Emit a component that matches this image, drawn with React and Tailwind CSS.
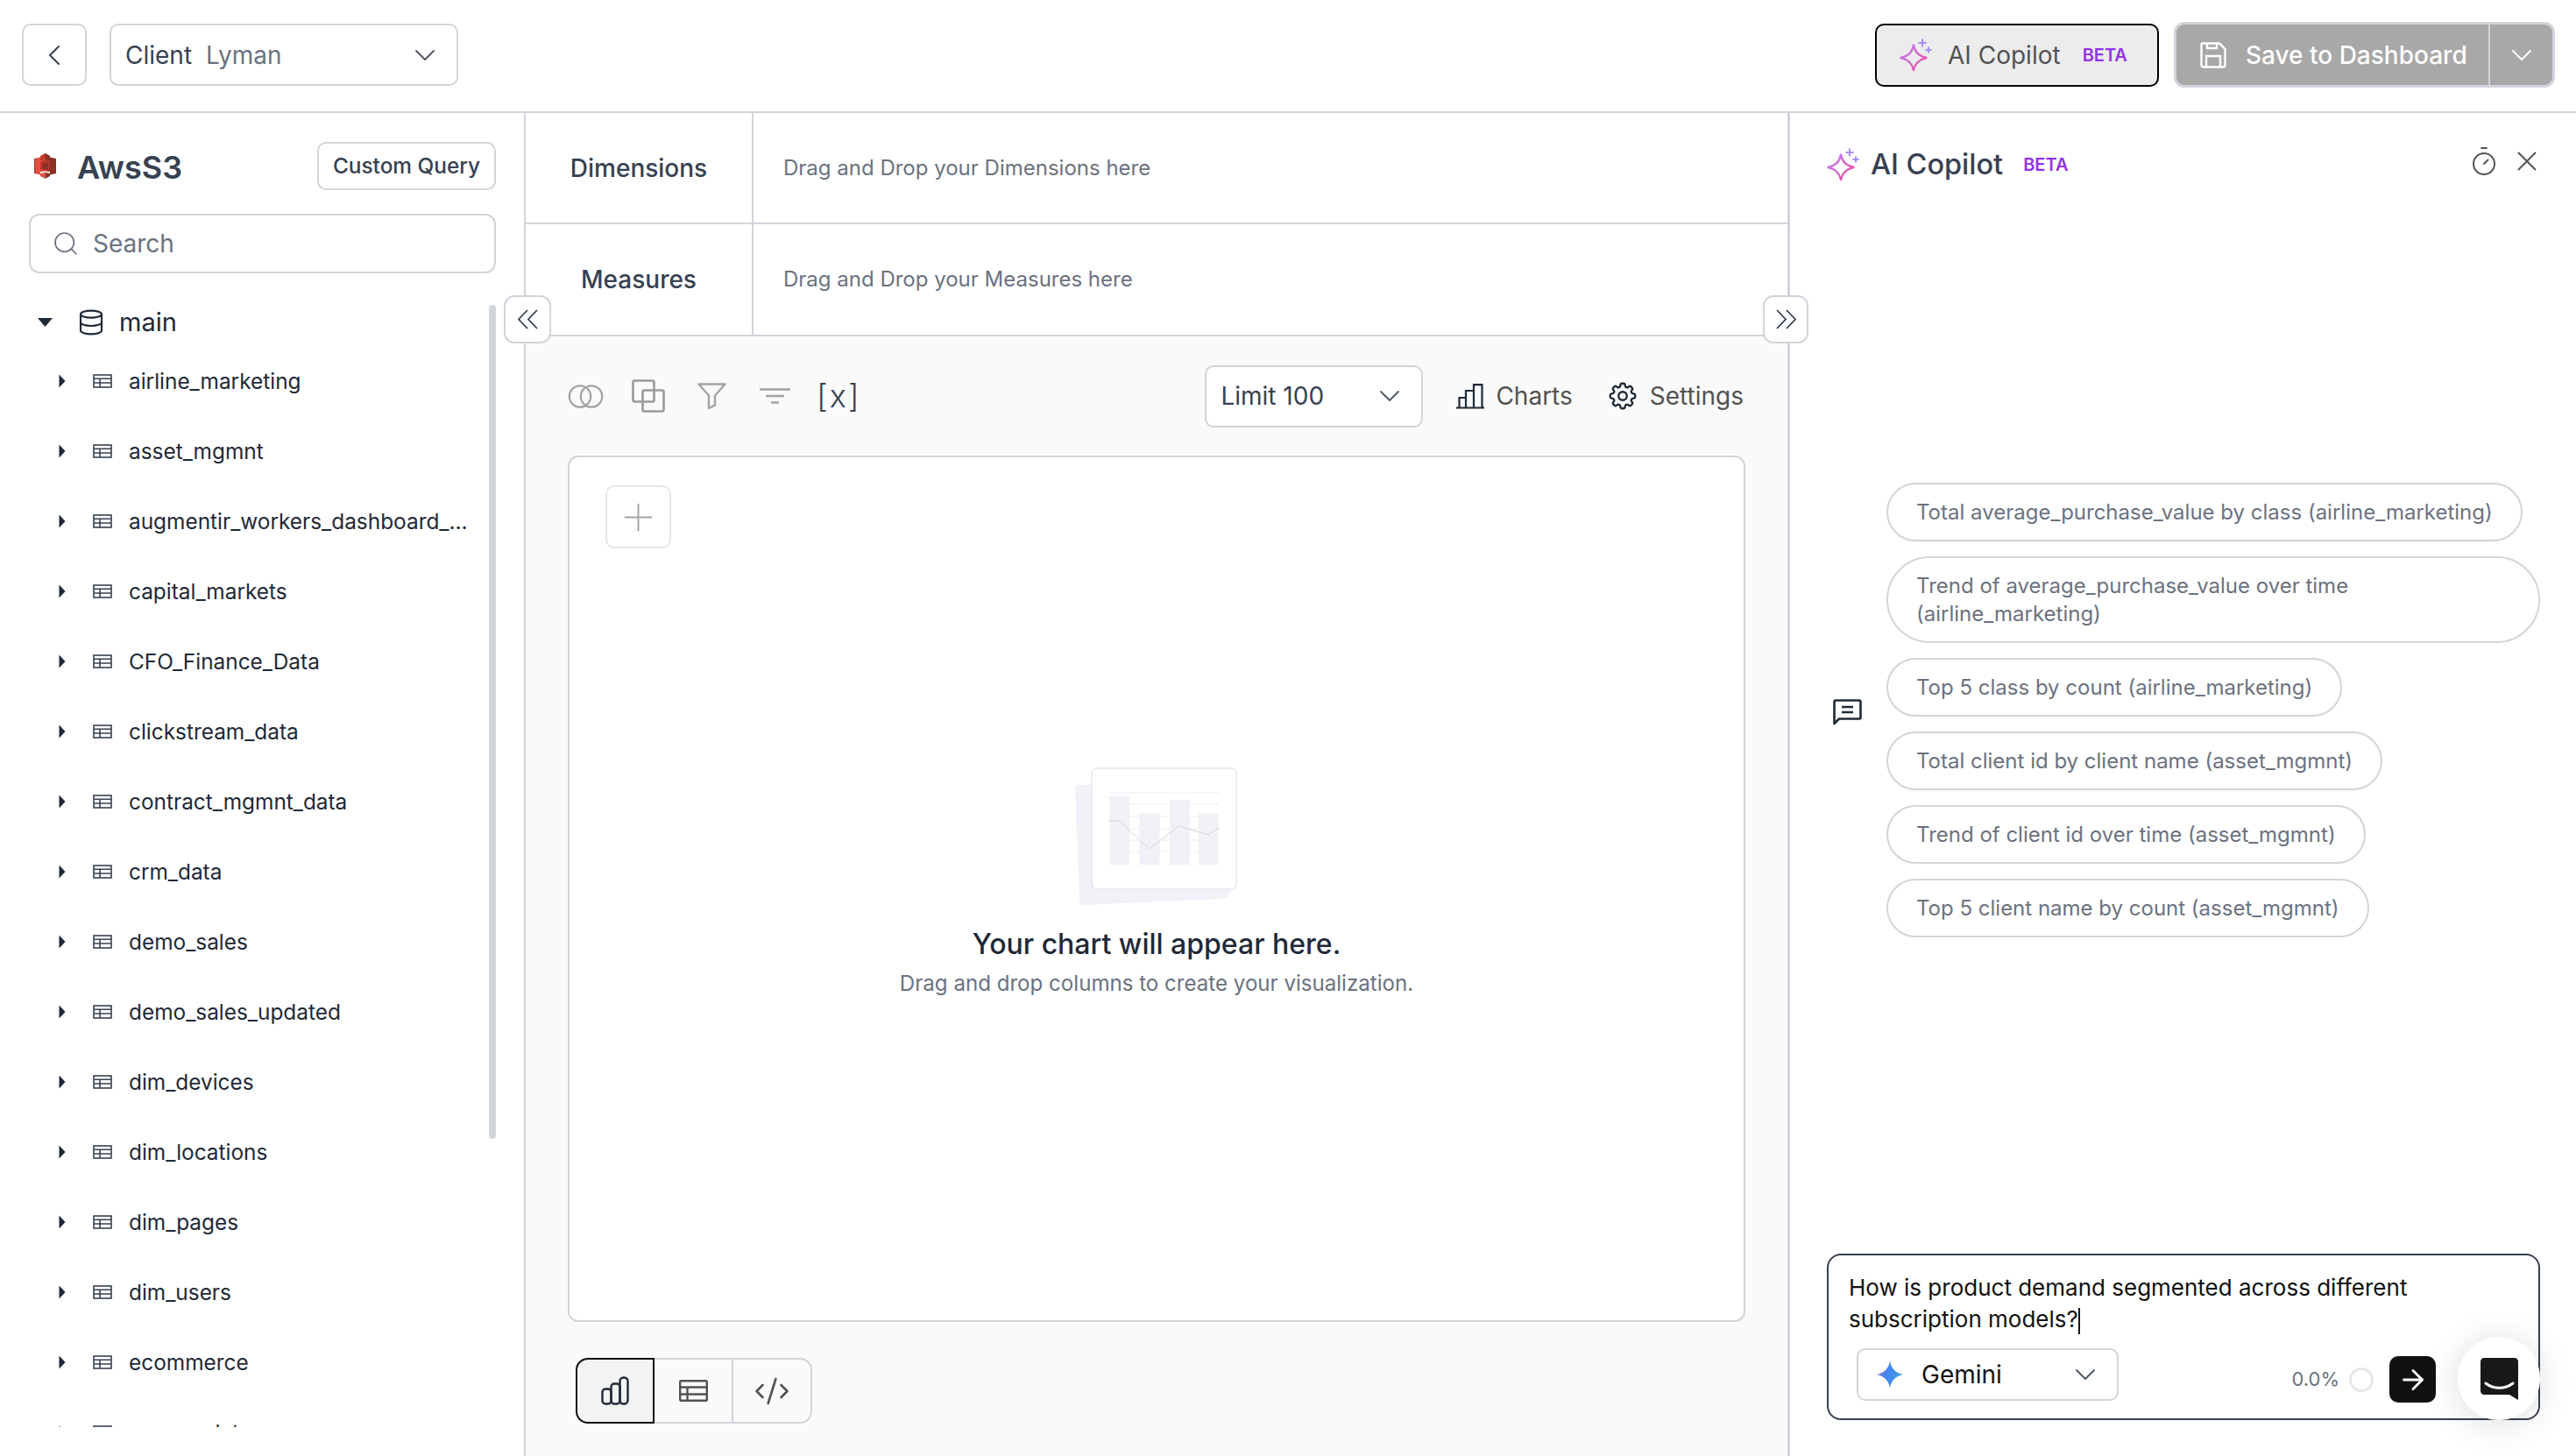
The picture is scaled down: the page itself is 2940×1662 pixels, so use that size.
import React from 'react';
import { ChevronLeft, ChevronDown, Search, Database, Plus, Timer, X, CodeXml, ArrowRight } from 'lucide-react';
import { HiOutlineCog8Tooth } from 'react-icons/hi2';

const TABLES = [
  'airline_marketing',
  'asset_mgmnt',
  'augmentir_workers_dashboard_data',
  'capital_markets',
  'CFO_Finance_Data',
  'clickstream_data',
  'contract_mgmnt_data',
  'crm_data',
  'demo_sales',
  'demo_sales_updated',
  'dim_devices',
  'dim_locations',
  'dim_pages',
  'dim_users',
  'ecommerce',
  'energy_data',
];

const SUGGESTIONS = [
  'Total average_purchase_value by class (airline_marketing)',
  'Trend of average_purchase_value over time (airline_marketing)',
  'Top 5 class by count (airline_marketing)',
  'Total client id by client name (asset_mgmnt)',
  'Trend of client id over time (asset_mgmnt)',
  'Top 5 client name by count (asset_mgmnt)',
];

function Sparkles({ id, className }) {
  return (
    <svg viewBox="0 0 37 37" fill="none" className={className}>
      <defs>
        <linearGradient id={id} x1="0" y1="0" x2="1" y2="1">
          <stop offset="0" stopColor="#c084fc" />
          <stop offset="1" stopColor="#ec4899" />
        </linearGradient>
      </defs>
      <path d="M16 7.5C17.5 15 21 19.5 30.5 22C21 24.5 17.5 29 16 36C14.5 29 11 24.5 1.5 22C11 19.5 14.5 15 16 7.5Z" stroke={`url(#${id})`} strokeWidth="2.4" strokeLinejoin="round" />
      <path d="M26 0.5V9.5M21.5 5H30.5M33 9.5V16.5M29.5 13H36.5" stroke="#a78bfa" strokeWidth="2" />
    </svg>
  );
}

function AwsLogo() {
  return (
    <svg viewBox="0 0 25 29" className="w-[25px] h-[29px] shrink-0">
      <path d="M0 6L7 4.5V24.5L0 23Z" fill="#e05243" />
      <path d="M0 6L1.5 5.7V23.3L0 23Z" fill="#b83c2e" />
      <path d="M25 6L18 4.5V24.5L25 23Z" fill="#8c3123" />
      <path d="M7 3L12.5 0L18 3V8.5L12.5 7.5L7 8.5Z" fill="#c7392c" />
      <path d="M12.5 0L18 3V8.5L12.5 7.5Z" fill="#8c3123" />
      <path d="M7 8.5L12.5 7.5L18 8.5V21L12.5 20L7 21Z" fill="#c7392c" />
      <path d="M12.5 7.5L18 8.5V21L12.5 20Z" fill="#a8372a" />
      <path d="M9.5 11H15.5V18H9.5Z" fill="#8c3123" />
      <path d="M7 21L12.5 20L18 21L12.5 22Z" fill="#f2b0a9" />
      <path d="M7 23L12.5 22V29L7 26Z" fill="#e05243" />
      <path d="M18 23L12.5 22V29L18 26Z" fill="#8c3123" />
    </svg>
  );
}

function TableIcon({ className }) {
  return (
    <svg viewBox="0 0 22 16" fill="none" stroke="currentColor" strokeWidth="1.6" className={className}>
      <rect x="1" y="1" width="20" height="14" />
      <path d="M1 5.2H21M1 10H21M8 5.2V15" />
    </svg>
  );
}

function TreeRow({ name }) {
  return (
    <div className="flex items-center h-[80px] pl-[34px] shrink-0">
      <svg viewBox="0 0 8 16" className="w-[8px] h-[16px] shrink-0 text-[#1f2937]">
        <path d="M0.5 0.5L7.5 8L0.5 15.5Z" fill="currentColor" />
      </svg>
      <TableIcon className="w-[22px] h-[16px] ml-[31px] shrink-0 text-[#374151]" />
      <span className="ml-[19px] pt-[1px] text-[24.4px] text-[#1f2937] truncate max-w-[387px]">{name}</span>
    </div>
  );
}

function Sidebar() {
  return (
    <aside className="relative w-[600px] shrink-0 border-r-2 border-[#d1d5db] pt-[33px] pb-[33px] pl-[33px] pr-[32px] flex flex-col h-full">
      <div className="flex items-center justify-between h-[55px] shrink-0">
        <div className="flex items-center gap-[24px] pl-[6px]">
          <AwsLogo />
          <span className="pt-[2px] text-[36px] font-semibold text-[#374151]">AwsS3</span>
        </div>
        <button className="w-[204px] h-[55px] rounded-[10px] border-2 border-[#d1d5db] text-[24.4px] font-medium text-[#374151]">Custom Query</button>
      </div>
      <div className="mt-[27px] h-[68px] shrink-0 rounded-[12px] border-2 border-[#d1d5db] flex items-center pl-[24px]">
        <Search className="w-[32px] h-[32px] text-[#6b7280]" strokeWidth={1.3} />
        <span className="ml-[15px] text-[28px] text-[#6b7280]">Search</span>
      </div>
      <div className="mt-[35px] flex-1 overflow-hidden flex flex-col">
        <div className="flex items-center h-[42px] pl-[10px] shrink-0">
          <svg viewBox="0 0 17 10" className="w-[17px] h-[10px] text-[#1f2937]"><path d="M0 0H17L8.5 10Z" fill="currentColor" /></svg>
          <Database className="w-[32px] h-[32px] ml-[28px] text-[#1f2937]" strokeWidth={1.6} />
          <span className="ml-[16px] text-[29px] text-[#1f2937]">main</span>
        </div>
        <div className="h-[6px] shrink-0" />
        {TABLES.map((t) => <TreeRow key={t} name={t} />)}
      </div>
      <div className="absolute left-[558px] top-[219px] w-[8px] h-[952px] rounded-full bg-[#d1d5db]" />
      <button className="absolute right-[-31px] top-[208px] w-[54px] h-[55px] z-10 bg-white rounded-[12px] border-2 border-[#d1d5db] flex items-center justify-center">
        <svg viewBox="0 0 23 23" fill="none" stroke="#374151" strokeWidth="1.8" className="w-[23px] h-[23px]">
          <path d="M11 1L1 11.5L11 22M22 1L12 11.5L22 22" />
        </svg>
      </button>
    </aside>
  );
}

function DropRow({ label, hint, height }) {
  return (
    <div className={`flex ${height} border-b-2 border-[#d1d5db] bg-white shrink-0`}>
      <div className="w-[260px] border-r-2 border-[#d1d5db] flex items-center justify-center text-[28px] font-medium text-[#374151]">{label}</div>
      <div className="flex items-center pl-[34px] text-[24px] text-[#6b7280]">{hint}</div>
    </div>
  );
}

function Toolbar() {
  return (
    <div className="h-[136px] shrink-0 flex items-center justify-between">
      <div className="flex items-center text-[#a3a3a3]">
        <svg viewBox="0 0 41 27" fill="none" stroke="currentColor" strokeWidth="2.2" className="w-[41px] h-[27px]">
          <circle cx="14" cy="13.5" r="12.2" />
          <circle cx="27" cy="13.5" r="12.2" />
        </svg>
        <svg viewBox="0 0 38 38" fill="none" stroke="#9a9a9a" strokeWidth="2.6" className="w-[38px] h-[38px] ml-[32px]">
          <rect x="1.5" y="1.5" width="24" height="24" rx="2" />
          <rect x="12.5" y="12.5" width="24" height="24" rx="2" />
        </svg>
        <svg viewBox="0 0 33 30" fill="none" stroke="currentColor" strokeWidth="2.4" strokeLinejoin="round" className="w-[33px] h-[30px] ml-[37px]">
          <path d="M1.5 1.5H31.5L20 14.5V25.5L13 29V14.5Z" />
        </svg>
        <svg viewBox="0 0 35 18" fill="none" stroke="currentColor" strokeWidth="2.4" className="w-[35px] h-[18px] ml-[38px]">
          <path d="M0 1.5H35M7 9H28M13 16.5H22" />
        </svg>
        <span className="ml-[30px] text-[36px] leading-none font-light tracking-[0.06em] text-[#374151]">[x]</span>
      </div>
      <div className="flex items-center pr-[2px]">
        <div className="w-[249px] h-[71px] bg-white rounded-[10px] border-2 border-[#d1d5db] flex items-center justify-between pl-[16px] pr-[16px]">
          <span className="text-[28px] text-[#374151]">Limit 100</span>
          <ChevronDown className="w-[40px] h-[40px] text-[#4b5563]" strokeWidth={1.1} />
        </div>
        <svg viewBox="0 0 32 29" fill="none" stroke="#1f2937" strokeWidth="2.2" className="w-[32px] h-[29px] ml-[38px]">
          <path d="M0 27.5H32M3.5 27.5V16H11V27.5M11 27.5V8H20V27.5M20 27.5V1.2H29.5V27.5" />
        </svg>
        <span className="ml-[13px] text-[28px] text-[#525252]">Charts</span>
        <HiOutlineCog8Tooth className="w-[38px] h-[38px] ml-[38px] text-[#1f2937]" />
        <span className="ml-[12px] text-[28px] text-[#525252]">Settings</span>
      </div>
    </div>
  );
}

function EmptyChart() {
  return (
    <div className="flex flex-col items-center mt-[-12px]">
      <svg viewBox="-1 0 190 164" className="w-[190px] h-[164px]" fill="none">
        <path d="M6 16H30V20H5C3 20 1 21 1 25L6 151C6 155 8 157 12 157L170 150C176 150 178 146 178 140V16Z" fill="#f1f2f7" />
        <rect x="20" y="1" width="165" height="138" rx="6" fill="white" stroke="#e5e7eb" strokeWidth="1.5" />
        <path d="M40 29H165M40 42H165M40 56H165M40 70H165M40 83H165M40 96H165" stroke="#f3f4f6" strokeWidth="1.5" />
        <path d="M40 33H63V111H40ZM74.5 52.5H97.5V111H74.5ZM109 37H132V111H109ZM142 52.5H165V111H142Z" fill="#f1f2f7" />
        <path d="M40 61H51L85.5 93L119.5 67L153 77L165 69" stroke="#d1d5db" strokeWidth="1" />
      </svg>
      <div className="mt-[16px] text-[32px] font-medium leading-[44px] text-[#1f2937]">Your chart will appear here.</div>
      <div className="mt-[5px] text-[24.1px] leading-[36px] text-[#6b7280]">Drag and drop columns to create your visualization.</div>
    </div>
  );
}

function Workspace() {
  return (
    <main className="relative w-[1443px] shrink-0 border-r-[3px] border-[#d1d5db] flex flex-col h-full bg-[#fafafa]">
      <DropRow label="Dimensions" hint="Drag and Drop your Dimensions here" height="h-[127px]" />
      <DropRow label="Measures" hint="Drag and Drop your Measures here" height="h-[128px]" />
      <div className="flex-1 flex flex-col px-[48px] min-h-0">
        <Toolbar />
        <div className="relative flex-1 bg-white rounded-[12px] border-2 border-[#d1d5db] flex items-center justify-center">
          <button className="absolute left-[41px] top-[32px] w-[75px] h-[72px] rounded-[10px] border-2 border-[#e5e7eb] flex items-center justify-center">
            <Plus className="w-[51px] h-[51px] text-[#a3a3a3]" strokeWidth={0.9} />
          </button>
          <EmptyChart />
        </div>
        <div className="h-[153px] shrink-0 pt-[41px] pl-[9px]">
          <div className="flex w-fit h-[75px] rounded-[14px] border-2 border-[#d1d5db]">
            <div className="w-[90px] -m-[2px] mr-0 h-[75px] rounded-l-[14px] border-2 border-[#111111] bg-[#f3f3f3] flex items-center justify-center">
              <svg viewBox="0 0 32 33" fill="none" stroke="#1f2937" strokeWidth="2.4" className="w-[32px] h-[33px]">
                <rect x="1.5" y="14.5" width="10" height="17" rx="3.5" />
                <rect x="11.5" y="8.5" width="10" height="23" rx="3.5" />
                <rect x="21.5" y="1.5" width="9" height="30" rx="4" />
              </svg>
            </div>
            <div className="w-[90px] flex items-center justify-center border-r-2 border-[#d1d5db]">
              <svg viewBox="0 0 33 25" fill="none" stroke="#525252" strokeWidth="2.4" className="w-[33px] h-[25px]">
                <rect x="1.2" y="1.2" width="30.6" height="22.6" rx="1" />
                <path d="M1.2 8.5H31.8M1.2 16.5H31.8M9.5 8.5V23.8" />
              </svg>
            </div>
            <div className="w-[88px] flex items-center justify-center">
              <CodeXml className="w-[42px] h-[42px] text-[#525252]" strokeWidth={1.5} />
            </div>
          </div>
        </div>
      </div>
      <button className="absolute right-[-24px] top-[208px] w-[52px] h-[55px] z-10 bg-white rounded-[12px] border-2 border-[#d1d5db] flex items-center justify-center">
        <svg viewBox="0 0 23 23" fill="none" stroke="#374151" strokeWidth="1.8" className="w-[23px] h-[23px]">
          <path d="M1 1L11 11.5L1 22M12 1L22 11.5L12 22" />
        </svg>
      </button>
    </main>
  );
}

function Copilot() {
  return (
    <section className="relative flex-1 h-full flex flex-col pl-[42px] pr-[41px] pb-[41px] bg-white">
      <div className="h-[116px] shrink-0 flex items-center">
        <Sparkles id="spark-panel" className="w-[37px] h-[37px]" />
        <span className="ml-[13px] pt-[2px] text-[32.5px] font-medium text-[#374151]">AI Copilot</span>
        <span className="ml-[23px] pt-[2px] text-[20px] font-semibold text-[#9333ea]">BETA</span>
        <div className="ml-auto mr-[-4px] mb-[6px] flex items-center gap-[12px] text-[#525252]">
          <Timer className="w-[36px] h-[36px]" strokeWidth={1.3} />
          <X className="w-[38px] h-[38px]" strokeWidth={1.2} />
        </div>
      </div>
      <div className="mt-[306px] flex items-center">
        <svg viewBox="0 0 33 30" fill="none" stroke="#1f2937" strokeWidth="2.6" className="w-[33px] h-[30px] ml-[7px] shrink-0 mt-[5px]">
          <path d="M1.5 28V3C1.5 2 2 1.5 3 1.5H30C31 1.5 31.5 2 31.5 3V21C31.5 22 31 22.5 30 22.5H7Z" strokeLinejoin="round" />
          <path d="M10 9H23M10 15H23" />
        </svg>
        <div className="ml-[28px] flex-1 flex flex-col items-start gap-[17px]">
          {SUGGESTIONS.map((s) => (
            <div key={s} className="rounded-full border-2 border-[#d1d5db] px-[32px] py-[15.5px] text-[24px] leading-[32px] text-[#6b7280]">{s}</div>
          ))}
        </div>
      </div>
      <div className="mt-auto relative h-[190px] shrink-0 rounded-[16px] border-2 border-[#374151] pl-[23px] pr-[24px] pt-[19px]">
        <div className="text-[26px] leading-[36px] text-[#111111] w-[700px]">
          How is product demand segmented across different subscription models?<span className="inline-block w-[2px] h-[30px] bg-[#111111] align-middle" />
        </div>
        <div className="absolute left-[32px] bottom-[20px] w-[299px] h-[60px] rounded-[10px] border-2 border-[#d1d5db] flex items-center pl-[20px] pr-[16px]">
          <svg viewBox="0 0 32 32" className="w-[32px] h-[32px] shrink-0">
            <defs>
              <linearGradient id="gemini" x1="0" y1="0" x2="1" y2="0.3">
                <stop offset="0" stopColor="#9b72cb" />
                <stop offset="0.5" stopColor="#4285f4" />
                <stop offset="1" stopColor="#3f9ee0" />
              </linearGradient>
            </defs>
            <path d="M16 0C17 9 23 15 32 16C23 17 17 23 16 32C15 23 9 17 0 16C9 15 15 9 16 0Z" fill="url(#gemini)" />
          </svg>
          <span className="ml-[20px] text-[28px] text-[#111111]">Gemini</span>
          <ChevronDown className="ml-auto w-[40px] h-[40px] text-[#4b5563]" strokeWidth={1.1} />
        </div>
        <div className="absolute right-[117px] bottom-[18px] flex items-center">
          <span className="text-[22px] text-[#6b7280]">0.0%</span>
          <span className="ml-[11px] w-[28px] h-[28px] rounded-full border-[3px] border-[#e5e7eb]" />
          <button className="ml-[18px] w-[53px] h-[53px] rounded-[10px] bg-[#111111] flex items-center justify-center">
            <ArrowRight className="w-[36px] h-[36px] text-white" strokeWidth={1.9} />
          </button>
        </div>
        <div className="absolute right-[-2px] bottom-[-2px] w-[94px] h-[95px] rounded-full bg-white shadow-[0_4px_40px_rgba(0,0,0,0.14)] flex items-center justify-center">
          <svg viewBox="0 0 43 48" className="w-[43px] h-[48px]">
            <path d="M4 0H39C41 0 43 2 43 4V48L33 42H4C2 42 0 40 0 38V4C0 2 2 0 4 0Z" fill="#18181b" />
            <path d="M6 29C15 36 28 36 37 29" stroke="white" strokeWidth="3" fill="none" strokeLinecap="round" />
          </svg>
        </div>
      </div>
    </section>
  );
}

export default function App() {
  return (
    <div className="w-[2940px] h-[1662px] overflow-hidden bg-white font-[Inter,sans-serif] flex flex-col">
      <header className="h-[129px] shrink-0 border-b-2 border-[#d1d5db] flex items-center justify-between pl-[25px] pr-[24px] pb-[2px]">
        <div className="flex items-center gap-[26px]">
          <button className="w-[74px] h-[71px] rounded-[10px] border-2 border-[#d1d5db] flex items-center justify-center">
            <ChevronLeft className="w-[40px] h-[40px] text-[#374151]" strokeWidth={1.2} />
          </button>
          <div className="w-[398px] h-[71px] rounded-[10px] border-2 border-[#d1d5db] flex items-center pl-[16px] pr-[16px]">
            <span className="text-[28px] text-[#374151]">Client</span>
            <span className="ml-[16px] text-[28px] text-[#6b7280]">Lyman</span>
            <ChevronDown className="ml-auto w-[40px] h-[40px] text-[#4b5563]" strokeWidth={1.1} />
          </div>
        </div>
        <div className="flex items-center gap-[17px]">
          <button className="w-[324px] h-[72px] rounded-[10px] border-2 border-black bg-[#ececec] flex items-center pl-[26px]">
            <Sparkles id="spark-top" className="w-[37px] h-[37px]" />
            <span className="ml-[18px] text-[28px] text-[#525252]">AI Copilot</span>
            <span className="ml-[25px] text-[20px] font-semibold text-[#9333ea]">BETA</span>
          </button>
          <div className="w-[435px] h-[75px] rounded-[12px] border-[3px] border-[#d1d5db] bg-[#a8a8a8] flex items-center text-white">
            <div className="flex-1 h-full flex items-center pl-[27px] border-r-2 border-[#d1d5db]">
              <svg viewBox="0 0 30 30" fill="none" stroke="white" strokeWidth="2.4" className="w-[30px] h-[30px]">
                <path d="M2 1.5H22L28.5 8V26C28.5 27.5 27.5 28.5 26 28.5H4C2.5 28.5 1.5 27.5 1.5 26V2Z" strokeLinejoin="round" />
                <path d="M7 28V16H23V28M8 1.5V7H19V1.5" />
              </svg>
              <span className="ml-[22px] text-[28px] font-medium">Save to Dashboard</span>
            </div>
            <div className="w-[71px] flex items-center justify-center">
              <ChevronDown className="w-[40px] h-[40px]" strokeWidth={1.2} />
            </div>
          </div>
        </div>
      </header>
      <div className="flex-1 min-h-0 flex">
        <Sidebar />
        <Workspace />
        <Copilot />
      </div>
    </div>
  );
}
